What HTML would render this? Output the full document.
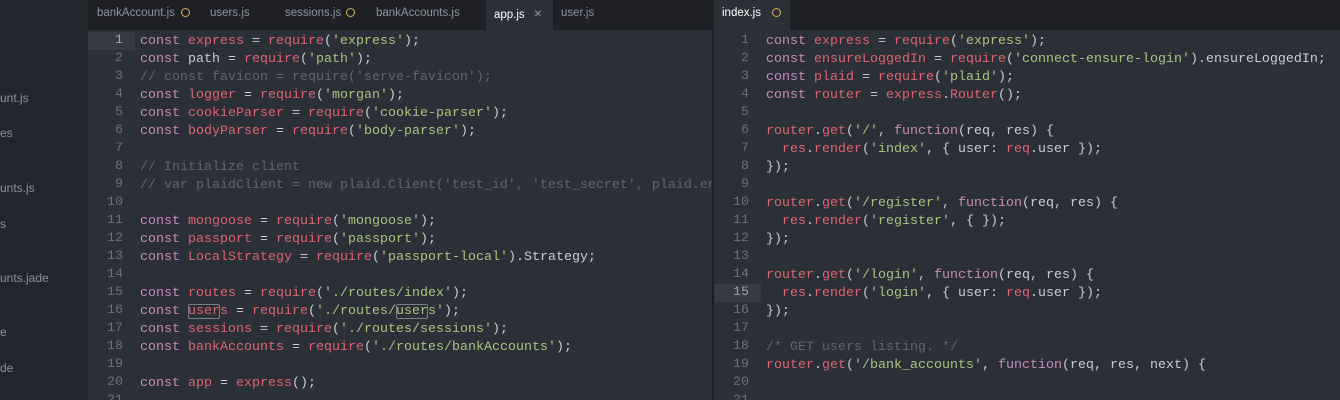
<!DOCTYPE html>
<html><head><meta charset="utf-8"><style>
*{margin:0;padding:0;box-sizing:border-box}
body{width:1340px;height:400px;overflow:hidden;background:#2b2f38;font-family:"Liberation Mono",monospace;position:relative}
#side{position:absolute;left:0;top:0;width:88px;height:400px;background:#22252c;overflow:hidden}
#side div{position:absolute;left:0;font:12px "Liberation Sans",sans-serif;color:#8c919b;white-space:nowrap}
.tabbar{position:absolute;top:0;height:30px;background:#1e2026}
.tab{position:absolute;top:0;height:30px;font:11.5px "Liberation Sans",sans-serif;color:#8d939e;line-height:26px;white-space:nowrap}
.tab.act{background:#2b2f38;color:#e6e8ec}
.dot{display:inline-block;width:9px;height:9px;border:1.5px solid #d6b14a;border-radius:50%;vertical-align:-1px}
.pane{position:absolute;top:30px;height:370px;overflow:hidden;background:#2b2f38}
.ln{position:absolute;left:0;width:47px;height:18px;text-align:right;padding-right:12px;color:#6b717d;font-size:13.33px;line-height:18px}
.ln.hl{background:#353a44;color:#9aa0aa}
.cl{position:absolute;height:18px;line-height:18px;font-size:13.33px;color:#c9ccd3;white-space:pre}
.k{color:#c98bb6}.v{color:#de6470}.s{color:#a9c47c}.c{color:#5f6673}
.box{outline:1px solid #7a7f88;outline-offset:-1px;border-radius:2px}
</style></head><body>
<div id="side">
<div style="top:91px">unt.js</div>
<div style="top:126px">es</div>
<div style="top:181px">unts.js</div>
<div style="top:217px">s</div>
<div style="top:271px">unts.jade</div>
<div style="top:325px">e</div>
<div style="top:361px">de</div>
</div>
<div class="tabbar" style="left:88px;width:624px"></div>
<div class="tab" style="left:97px">bankAccount.js</div>
<div class="tab" style="left:181px"><span class="dot"></span></div>
<div class="tab" style="left:210px">users.js</div>
<div class="tab" style="left:285px">sessions.js</div>
<div class="tab" style="left:346px"><span class="dot"></span></div>
<div class="tab" style="left:376px">bankAccounts.js</div>
<div class="tab act" style="left:486px;width:67px;padding-left:8px;color:#fff">app.js <span style="color:#8d939e;margin-left:6px;font-size:14px">×</span></div>
<div class="tab" style="left:561px">user.js</div>
<div style="position:absolute;left:712px;top:0;width:2px;height:400px;background:#1c1e23"></div>
<div class="tabbar" style="left:714px;width:626px"></div>
<div class="tab act" style="left:714px;width:76px;padding-left:8px;color:#fff">index.js <span class="dot" style="margin-left:8px"></span></div>

<div class="pane" style="left:88px;width:624px">
<div id="L"></div>
</div>
<div class="pane" style="left:714px;width:626px">
<div id="R"></div>
</div>
<script>
function build(id,lines,hl){
 var h='';
 for(var i=0;i<lines.length;i++){
  var t=2+i*18;
  h+='<div class="ln'+(i+1==hl?' hl':'')+'" style="top:'+t+'px">'+(i+1)+'</div>';
  h+='<div class="cl" style="left:52px;top:'+(t+1)+'px">'+lines[i]+'</div>';
 }
 document.getElementById(id).innerHTML=h;
}
var K='<span class="k">',V='<span class="v">',S='<span class="s">',C='<span class="c">',E='</span>';
function req(s){return V+'require'+E+'('+S+"'"+s+"'"+E+');';}
build('L',[
K+'const'+E+' '+V+'express'+E+' = '+req('express'),
K+'const'+E+' path = '+req('path'),
C+"// const favicon = require('serve-favicon');"+E,
K+'const'+E+' '+V+'logger'+E+' = '+req('morgan'),
K+'const'+E+' '+V+'cookieParser'+E+' = '+req('cookie-parser'),
K+'const'+E+' '+V+'bodyParser'+E+' = '+req('body-parser'),
'',
C+'// Initialize client'+E,
C+"// var plaidClient = new plaid.Client('test_id', 'test_secret', plaid.environments.tartan);"+E,
'',
K+'const'+E+' '+V+'mongoose'+E+' = '+req('mongoose'),
K+'const'+E+' '+V+'passport'+E+' = '+req('passport'),
K+'const'+E+' '+V+'LocalStrategy'+E+' = '+V+'require'+E+'('+S+"'passport-local'"+E+').Strategy;',
'',
K+'const'+E+' '+V+'routes'+E+' = '+req('./routes/index'),
K+'const'+E+' '+V+'<span class="box">user</span>s'+E+' = '+V+'require'+E+'('+S+"'./routes/<span class=\"box\">user</span>s'"+E+');',
K+'const'+E+' '+V+'sessions'+E+' = '+req('./routes/sessions'),
K+'const'+E+' '+V+'bankAccounts'+E+' = '+req('./routes/bankAccounts'),
'',
K+'const'+E+' '+V+'app'+E+' = '+V+'express'+E+'();',
''
],1);
function get(p,args){return V+'router'+E+'.'+V+'get'+E+'('+S+"'"+p+"'"+E+', '+K+'function'+E+'('+args+') {';}
build('R',[
K+'const'+E+' '+V+'express'+E+' = '+req('express'),
K+'const'+E+' '+V+'ensureLoggedIn'+E+' = '+V+'require'+E+'('+S+"'connect-ensure-login'"+E+').ensureLoggedIn;',
K+'const'+E+' '+V+'plaid'+E+' = '+req('plaid'),
K+'const'+E+' '+V+'router'+E+' = '+V+'express'+E+'.'+V+'Router'+E+'();',
'',
get('/','req, res'),
'  '+V+'res'+E+'.'+V+'render'+E+'('+S+"'index'"+E+', { user: '+V+'req'+E+'.user });',
'});',
'',
get('/register','req, res'),
'  '+V+'res'+E+'.'+V+'render'+E+'('+S+"'register'"+E+', { });',
'});',
'',
get('/login','req, res'),
'  '+V+'res'+E+'.'+V+'render'+E+'('+S+"'login'"+E+', { user: '+V+'req'+E+'.user });',
'});',
'',
C+'/* GET users listing. */'+E,
get('/bank_accounts','req, res, next'),
'',
''
],15);
</script>
</body></html>
